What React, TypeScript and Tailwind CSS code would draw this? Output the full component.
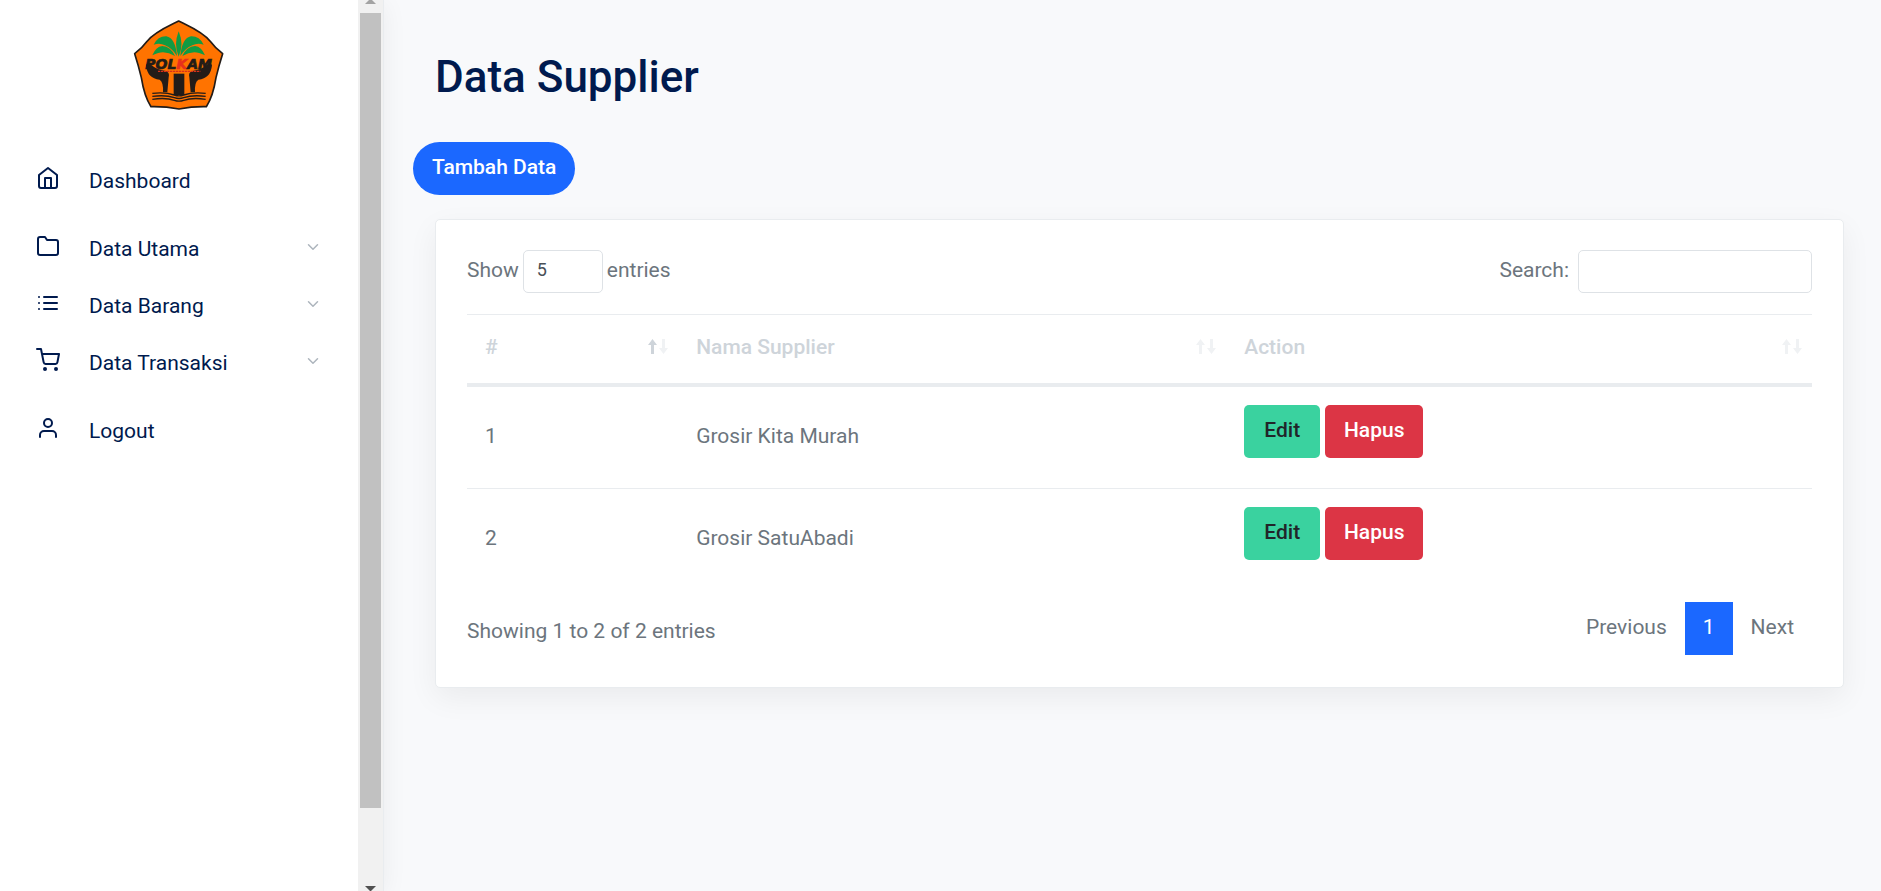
import { useState } from "react";
import type { ReactNode } from "react";
import { FiChevronDown, FiFolder, FiHome, FiList, FiShoppingCart, FiUser } from "react-icons/fi";

type Supplier = { id: number; name: string };

const suppliers: Supplier[] = [
  { id: 1, name: "Grosir Kita Murah" },
  { id: 2, name: "Grosir SatuAbadi" },
];

function Logo() {
  return (
    <svg viewBox="70 57 276 276" className="size-23" role="img" aria-label="Polkam">
      <path
        d="M207 63 C232 76 278 94 303 125 Q316 143 339 161 Q328 195 319 233 Q310 290 290 320 Q250 319 208 327 Q166 319 124 320 Q104 290 95 233 Q86 195 75 161 Q98 143 111 125 C136 94 182 76 207 63Z"
        fill="#ff7300"
        stroke="#231c18"
        strokeWidth="5"
        strokeLinejoin="round"
      />
      <g fill="#119b43">
        <path d="M207 94 Q224 134 207 170 Q191 134 207 94Z" />
        <path d="M202 168 Q197 114 170 109 Q145 108 132 134 Q151 128 166 136 Q188 145 202 168Z" />
        <path d="M196 168 Q183 139 158 138 Q138 140 128 166 Q147 157 160 157 Q178 158 196 168Z" />
        <path d="M212 168 Q217 114 244 109 Q269 108 282 134 Q263 128 248 136 Q226 145 212 168Z" />
        <path d="M218 168 Q231 139 256 138 Q276 140 286 166 Q267 157 254 157 Q236 158 218 168Z" />
      </g>
      <g fill="#231c18">
        <path d="M109 196 Q113 185 124 194 Q140 208 168 213 Q181 217 177 232 L173 277 H160 Q162 247 150 239 Q113 236 109 196Z" />
        <path d="M307 196 Q303 185 292 194 Q276 208 248 213 Q235 217 239 232 L243 277 H256 Q254 247 266 239 Q303 236 307 196Z" />
        <path d="M192 221 H224 V285 H192Z" />
      </g>
      <g fill="none" stroke="#231c18" strokeWidth="4">
        <path d="M128 280 Q168 276 194 285 Q208 290 222 285 Q248 276 288 280" />
        <path d="M128 289 Q168 284 194 293 Q208 298 222 293 Q248 284 288 289" />
        <path d="M128 298 Q168 292 194 301 Q208 306 222 301 Q248 292 288 298" />
      </g>
      <text
        x="207"
        y="206"
        textAnchor="middle"
        fontFamily="DejaVu Sans, sans-serif"
        fontWeight="700"
        fontStyle="italic"
        fontSize="42"
        fill="#231c18"
        stroke="#231c18"
        strokeWidth="2"
      >
        POL<tspan fill="#e8301c" stroke="#e8301c">K</tspan>AM
      </text>
      <path d="M145 214 H272" stroke="#d6301c" strokeWidth="4" strokeDasharray="7 2" />
    </svg>
  );
}

function NavItem({ icon, label, expandable }: { icon: ReactNode; label: string; expandable?: boolean }) {
  return (
    <li>
      <a href="#" className="flex h-14 items-center pr-9 pl-9 text-[21px] text-[#001a4e]">
        <span className="mb-1.5 text-2xl">{icon}</span>
        <span className="ml-[29px] grow">{label}</span>
        {expandable && <FiChevronDown className="mb-1 size-[18px] text-[#adb5bd]" />}
      </a>
    </li>
  );
}

function Scrollbar() {
  return (
    <div aria-hidden="true" className="flex h-full w-[25px] shrink-0 flex-col items-center justify-between bg-[#f1f1f1]">
      <svg viewBox="0 0 11 4" className="h-1 w-[11px]" fill="#a3a3a3">
        <path d="M4 0h3l4 4H0z" />
      </svg>
      <div className="mt-[9px] mb-auto h-[89.2%] w-[21px] bg-[#c1c1c1]" />
      <svg viewBox="0 0 11 5" className="h-[5px] w-[11px]" fill="#505050">
        <path d="M0 0h11L6 5H5z" />
      </svg>
    </div>
  );
}

function Sidebar() {
  return (
    <aside className="flex h-full w-96 shrink-0 border-r border-[#e9ecef] bg-white shadow-[0_4px_24px_rgba(0,0,0,0.06)]">
      <nav className="flex min-w-0 grow flex-col">
        <a href="#" className="mt-[19px] mb-[42px] self-center">
          <Logo />
        </a>
        <ul>
          <NavItem icon={<FiHome />} label="Dashboard" />
        </ul>
        <ul className="my-3 flex flex-col gap-px">
          <NavItem icon={<FiFolder />} label="Data Utama" expandable />
          <NavItem icon={<FiList />} label="Data Barang" expandable />
          <NavItem icon={<FiShoppingCart />} label="Data Transaksi" expandable />
        </ul>
        <ul>
          <NavItem icon={<FiUser />} label="Logout" />
        </ul>
      </nav>
      <Scrollbar />
    </aside>
  );
}

function SortArrows({ ascending }: { ascending?: boolean }) {
  return (
    <svg viewBox="0 0 20 15" className="mb-0.5 h-[15px] w-5">
      <path d="M4.500 0 9 6H6v9H3V6H0z" fill={ascending ? "#ced4da" : "#f0f2f4"} />
      <path d="M15.500 15 20 9h-3V0h-3v9h-3z" fill="#f0f2f4" />
    </svg>
  );
}

function HeaderCell({ label, width, ascending }: { label: string; width: string; ascending?: boolean }) {
  return (
    <th className={`${width} h-[72px] p-0 text-left font-medium`}>
      <button type="button" className="flex w-full items-center justify-between pr-2.5 pb-1 pl-[18px]">
        {label}
        <SortArrows ascending={ascending} />
      </button>
    </th>
  );
}

export default function App() {
  const [query, setQuery] = useState("");
  const rows = suppliers.filter((s) => s.name.toLowerCase().includes(query.toLowerCase()));

  return (
    <div className="flex h-screen bg-[#f8f9fb] font-[Roboto,sans-serif] text-[21px] leading-[30px] text-[#6c757d]">
      <Sidebar />
      <main className="min-w-0 grow overflow-hidden pt-[52px] pr-[37px] pl-[51px]">
        <h1 className="text-[44px] leading-[50px] font-medium text-[#001a4e]">Data Supplier</h1>
        <button
          type="button"
          className="mt-10 -ml-[22px] block h-[53px] rounded-full bg-[#1b68ff] px-[19px] pb-[3px] font-medium text-white"
        >
          Tambah Data
        </button>

        <section className="mt-6 rounded-[5px] border border-[#e9ecef] bg-white px-[31px] pt-[30px] pb-8 shadow-[0_10px_30px_rgba(0,0,0,0.06)]">
          <div className="flex justify-between">
            <label className="flex gap-1 leading-10">
              Show
              <select
                defaultValue="5"
                className="h-[43px] w-20 appearance-none rounded-[5px] border border-[#dee2e6] bg-white px-[13px] pb-1 text-lg text-[#495057]"
              >
                <option>5</option>
                <option>10</option>
                <option>25</option>
              </select>
              entries
            </label>
            <label className="flex gap-[9px] leading-10">
              Search:
              <input
                type="search"
                value={query}
                onChange={(e) => setQuery(e.target.value)}
                className="h-[43px] w-[234px] rounded-[5px] border border-[#dee2e6] bg-white px-3 text-lg text-[#495057]"
              />
            </label>
          </div>

          <table className="mt-[21px] w-full table-fixed border-separate border-spacing-0 border-t border-[#e9ecef]">
            <thead className="text-[#ced4da]">
              <tr className="*:border-b-4 *:border-[#e9ecef]">
                <HeaderCell label="#" width="w-[15.7%]" ascending />
                <HeaderCell label="Nama Supplier" width="w-[40.75%]" />
                <HeaderCell label="Action" width="w-auto" />
              </tr>
            </thead>
            <tbody>
              {rows.map((s, i) => (
                <tr key={s.id} className={i > 0 ? "*:border-t *:border-[#e9ecef]" : ""}>
                  <td className="h-[101px] px-[18px] pb-[3px]">{s.id}</td>
                  <td className="px-[18px] pb-[3px]">{s.name}</td>
                  <td className="px-[18px] pt-[18px] pb-[30px]">
                    <div className="flex gap-[5px] font-medium">
                      <button type="button" className="h-[53px] w-[76px] rounded-[5px] bg-[#3ad29f] pb-[3px] text-[#212529]">
                        Edit
                      </button>
                      <button type="button" className="h-[53px] w-[98px] rounded-[5px] bg-[#dc3545] pb-[3px] text-white">
                        Hapus
                      </button>
                    </div>
                  </td>
                </tr>
              ))}
            </tbody>
          </table>

          <div className="mt-3 flex items-end justify-between">
            <p className="pb-[9px]">Showing 1 to {rows.length} of {suppliers.length} entries</p>
            <div className="flex *:h-[53px] *:px-[18px] *:pb-1">
              <button type="button">Previous</button>
              <button type="button" className="bg-[#1b68ff] text-white">
                1
              </button>
              <button type="button">Next</button>
            </div>
          </div>
        </section>
      </main>
    </div>
  );
}
